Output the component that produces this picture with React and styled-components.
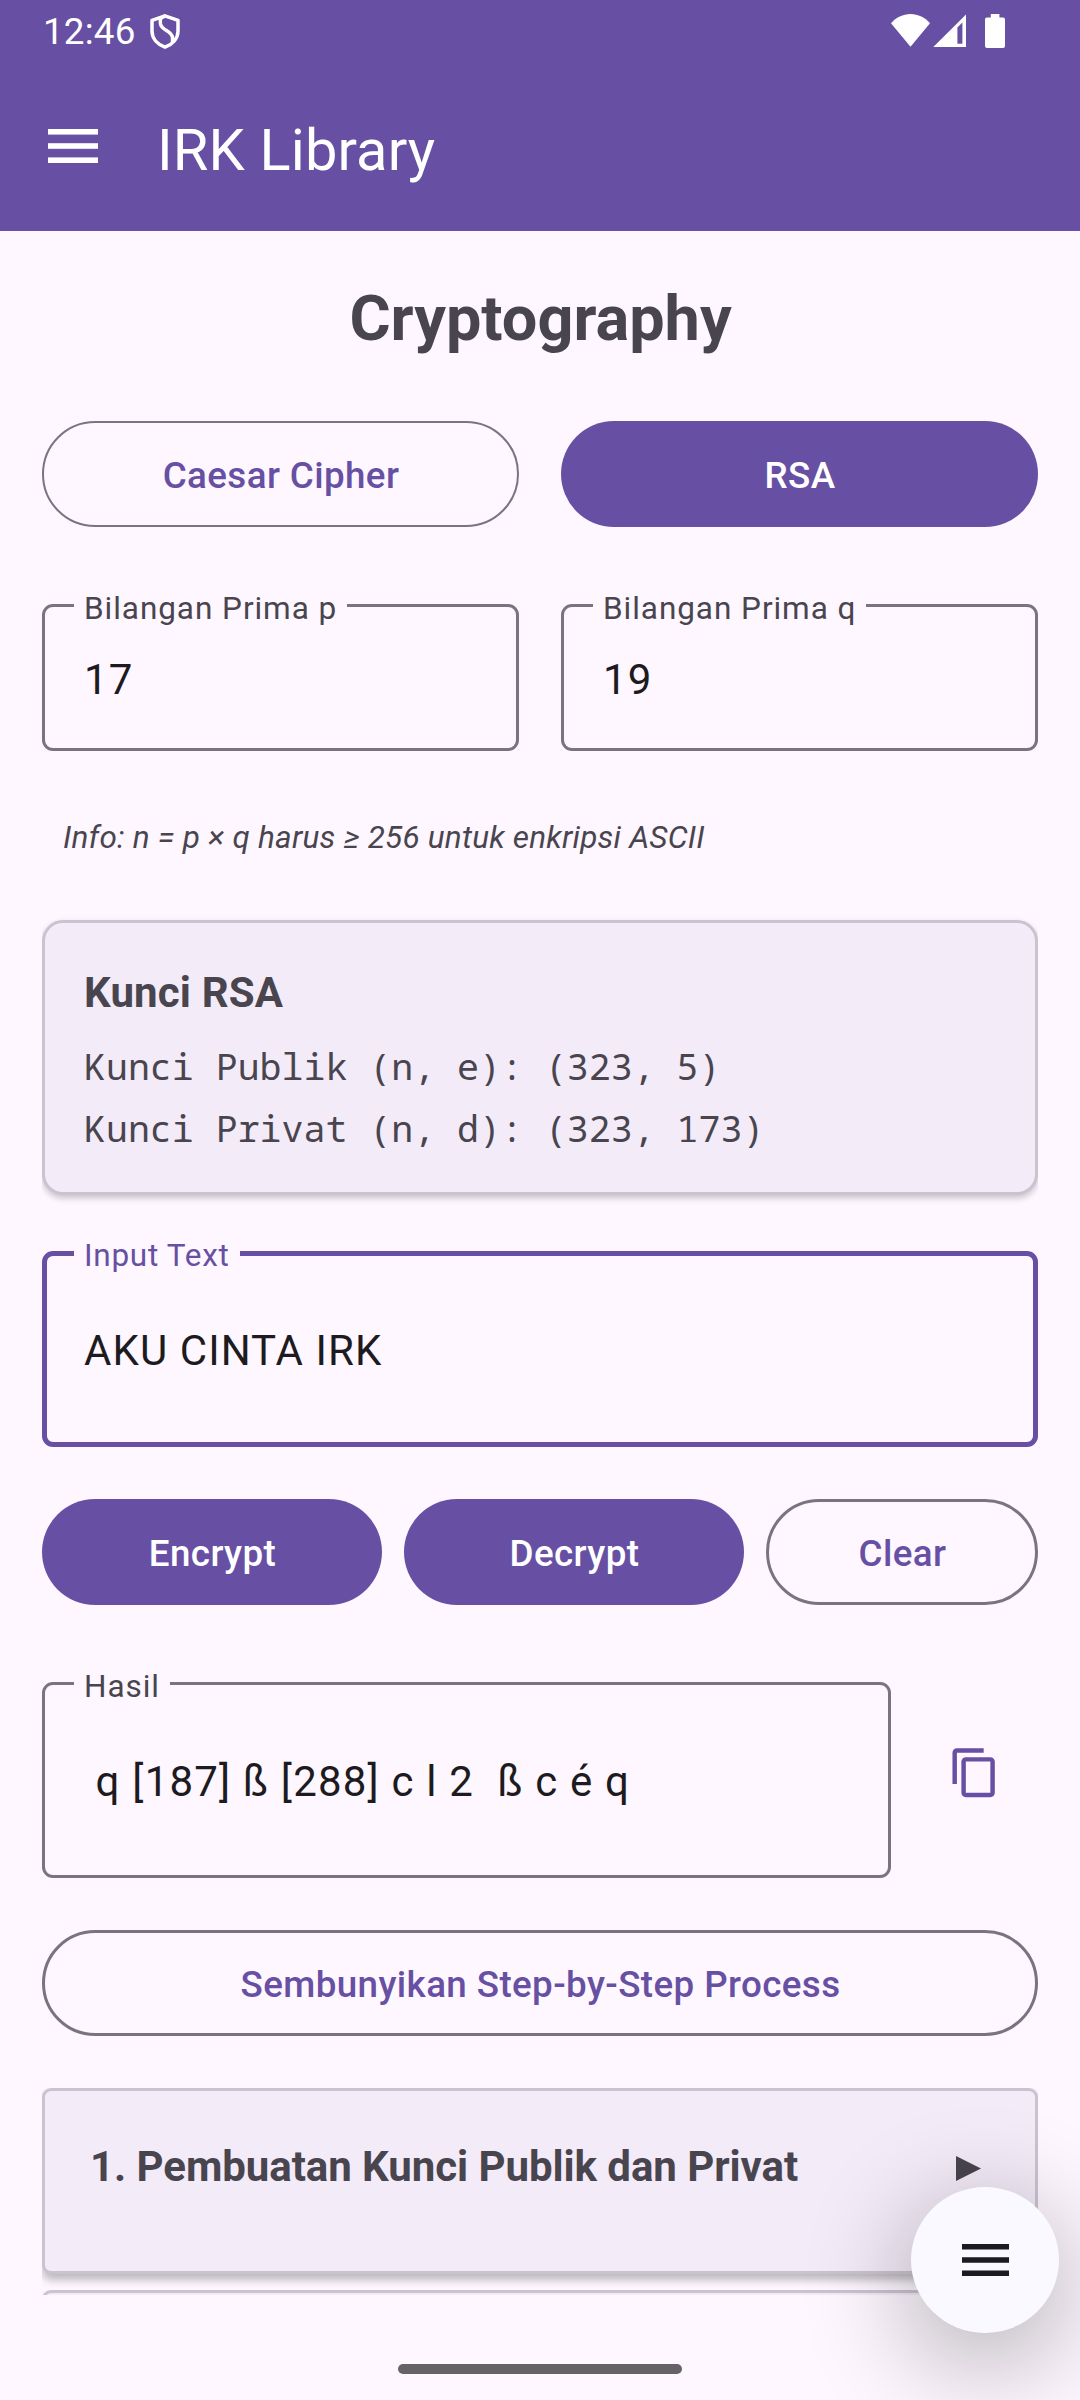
import React from "react";
import styled, { createGlobalStyle, css } from "styled-components";

const c = {
  primary: "#6750a3",
  surface: "#fef7ff",
  card: "#f3ebf8",
  outline: "#79747e",
  outlineSoft: "#cac4d0",
  text: "#1d1b20",
  muted: "#49454f",
};

const GlobalStyle = createGlobalStyle`
  * { box-sizing: border-box; }
  body { margin: 0; background: ${c.surface}; font-family: Roboto, "Liberation Sans", sans-serif; }
`;

const Screen = styled.div`
  position: relative;
  display: flex;
  flex-direction: column;
  width: 1080px;
  height: 2400px;
  overflow: hidden;
  background: ${c.surface};
  color: ${c.muted};
`;

const StatusBar = styled.header`
  display: flex;
  justify-content: space-between;
  height: 63px;
  padding: 14px 75px 0 43px;
  background: ${c.primary};
  color: #fff;
`;

const StatusGroup = styled.div`
  display: flex;
  align-items: flex-start;
`;

const Clock = styled.span`
  width: 107px;
  padding-top: 1px;
  font-size: 36.75px;
  letter-spacing: 0.2px;
  line-height: 34px;
`;

const AppBar = styled.div`
  display: flex;
  align-items: center;
  height: 168px;
  padding: 0 48px 0 48px;
  background: ${c.primary};
  color: #fff;
`;

const MenuButton = styled.button`
  display: flex;
  width: 50px;
  height: 34px;
  margin: 0 59px 2px 0;
  padding: 0;
  border: 0;
  background: none;
  color: inherit;
`;

const AppTitle = styled.span`
  padding-top: 6px;
  font-size: 57.75px;
  letter-spacing: 0.15px;
  line-height: 68px;
`;

const Content = styled.main`
  display: flex;
  flex-direction: column;
  height: 2064px;
  padding: 50px 42px 0;
  overflow: hidden;
`;

const Heading = styled.h1`
  margin: 0 0 65px;
  padding-left: 1px;
  font-size: 63px;
  font-weight: 700;
  line-height: 75px;
  text-align: center;
`;

const Row = styled.div`
  display: grid;
  flex: none;
  grid-template-columns: ${(p) => p.$cols || "1fr"};
  column-gap: ${(p) => p.$gap || 0}px;
  margin-bottom: ${(p) => p.$after}px;
`;

const Button = styled.button`
  display: flex;
  align-items: center;
  justify-content: center;
  min-width: 0;
  height: 106px;
  padding: 3px 0 0 1px;
  border: ${(p) => p.$line || 3}px solid ${c.outline};
  border-radius: 53px;
  background: transparent;
  color: ${c.primary};
  font: 500 36.75px/43px Roboto, "Liberation Sans", sans-serif;
  letter-spacing: 0.4px;
  ${(p) =>
    p.$filled &&
    css`
      border: 0;
      background: ${c.primary};
      color: #fff;
    `}
`;

const Field = styled.fieldset`
  height: ${(p) => p.$height}px;
  min-width: 0;
  margin: 0;
  padding: 0 ${(p) => (p.$focused ? 27 : 29)}px;
  border: ${(p) => (p.$focused ? 5 : 3)}px solid ${(p) => (p.$focused ? c.primary : c.outline)};
  border-radius: 11px;
`;

const FieldLabel = styled.legend`
  height: 41px;
  padding: ${(p) => (p.$focused ? 4 : 5)}px 10px 0;
  color: ${(p) => (p.$focused ? c.primary : c.muted)};
  font-size: 31.5px;
  letter-spacing: ${(p) => (p.$focused ? 0.72 : 0.95)}px;
  line-height: 37px;
`;

const FieldValue = styled.div`
  padding: ${(p) => p.$top}px 10px 0;
  color: ${c.text};
  font-size: 42px;
  letter-spacing: ${(p) => (p.$focused ? 1.08 : 1.2)}px;
  line-height: 50px;
  white-space: pre;
`;

const Info = styled.p`
  margin: 10px 21px 64px;
  font-size: 31.5px;
  font-style: italic;
  letter-spacing: 0.21px;
  line-height: 37px;
`;

const KeyCard = styled.section`
  flex: none;
  height: 275px;
  margin-bottom: 38px;
  padding: 45px 39px 0;
  border: 3px solid ${c.outlineSoft};
  border-radius: 21px;
  background: ${c.card};
  box-shadow: 0 3px 6px rgba(0, 0, 0, 0.22);
  clip-path: inset(-20px 0);
`;

const KeyTitle = styled.h2`
  margin: 0 0 17px;
  font-size: 42px;
  font-weight: 700;
  letter-spacing: 0.15px;
  line-height: 50px;
`;

const KeyLine = styled.div`
  font-family: "Droid Sans Mono", "Noto Sans Mono", "DejaVu Sans Mono", monospace;
  font-size: 36.6px;
  line-height: 62px;
  white-space: pre;
`;

const CopyButton = styled.button`
  display: flex;
  align-items: center;
  justify-content: center;
  width: 147px;
  height: 147px;
  margin: 36px 0 0;
  padding: 0 0 0 20px;
  border: 0;
  background: none;
  color: ${c.primary};
`;

const StepCard = styled.section`
  display: flex;
  flex: none;
  align-items: flex-start;
  justify-content: space-between;
  height: 186px;
  margin-bottom: 16px;
  padding: 51px 54px 0 45px;
  border: 3px solid ${c.outlineSoft};
  border-radius: 9px;
  background: ${c.card};
  box-shadow: 0 6px 8px rgba(0, 0, 0, 0.26);
  clip-path: inset(0 0 -14px);
`;

const StepTitle = styled.h3`
  margin: 0;
  font-size: 42px;
  font-weight: 700;
  letter-spacing: -0.06px;
  line-height: 50px;
`;

const Arrow = styled.svg`
  width: 25px;
  height: 25px;
  margin-top: 14px;
  fill: currentColor;
`;

const NavBar = styled.footer`
  display: flex;
  justify-content: center;
  padding-top: 69px;
`;

const NavHandle = styled.div`
  width: 284px;
  height: 10px;
  border-radius: 5px;
  background: #656366;
`;

const Fab = styled.button`
  position: absolute;
  right: 21px;
  bottom: 67px;
  display: flex;
  align-items: center;
  justify-content: center;
  width: 148px;
  height: 146px;
  padding: 0;
  border: 0;
  border-radius: 50%;
  background: #f9f9ff;
  color: ${c.text};
  box-shadow: 0 26px 108px 2px rgba(0, 0, 0, 0.33);
`;

const Bars = ({ width, height, bar }) => (
  <svg width={width} height={height} fill="currentColor">
    <rect width={width} height={bar} />
    <rect y={(height - bar) / 2} width={width} height={bar} />
    <rect y={height - bar} width={width} height={bar} />
  </svg>
);

const Shield = () => (
  <svg width="30" height="35" viewBox="0 0 30 35" fill="none" stroke="#fff" strokeWidth="3.5" strokeLinejoin="round">
    <path d="M15 1.8 28 6.4V17c0 7.5-5.4 13.4-13 16.2C7.400 30.400 2 24.500 2 17V6.400Z" />
    <path d="M15 2C9.500 4 10 6 10.500 10C11.500 16.500 22.500 17 22.500 24V28" />
  </svg>
);

const StatusIcons = () => (
  <svg width="114" height="35" viewBox="0 0 114 35" fill="#fff">
    <path d="M0 9.200C5 3.500 12 0 19.500 0S34 3.500 39 9.200L19.500 32.700Z" />
    <path fillRule="evenodd" d="M42.300 33 75 .500V33ZM66.400 13.500v16.200h5V8.500Z" />
    <path d="M99.800 0h8.600v3.400h3.600a2 2 0 0 1 2 2V32a2 2 0 0 1-2 2H96a2 2 0 0 1-2-2V5.400a2 2 0 0 1 2-2h3.800Z" />
  </svg>
);

const CopyIcon = () => (
  <svg width="53.5" height="53.5" viewBox="0 0 24 24" fill="currentColor">
    <path d="M16 1H4c-1.100 0-2 .9-2 2v14h2V3h12V1zm3 4H8c-1.100 0-2 .9-2 2v14c0 1.100.9 2 2 2h11c1.100 0 2-.9 2-2V7c0-1.100-.9-2-2-2zm0 16H8V7h11v14z" />
  </svg>
);

const TextField = ({ label, value, height, top, focused }) => (
  <Field $height={height} $focused={focused}>
    <FieldLabel $focused={focused}>{label}</FieldLabel>
    <FieldValue $top={top} $focused={focused}>{value}</FieldValue>
  </Field>
);

export default function App() {
  return (
    <>
      <GlobalStyle />
      <Screen>
        <StatusBar>
          <StatusGroup>
            <Clock>12:46</Clock>
            <Shield />
          </StatusGroup>
          <StatusIcons />
        </StatusBar>
        <AppBar>
          <MenuButton aria-label="Menu">
            <Bars width={50} height={34} bar={5.6} />
          </MenuButton>
          <AppTitle>IRK Library</AppTitle>
        </AppBar>
        <Content>
          <Heading>Cryptography</Heading>
          <Row $cols="1fr 1fr" $gap={42} $after={58}>
            <Button $line={2}>Caesar Cipher</Button>
            <Button $filled>RSA</Button>
          </Row>
          <Row $cols="1fr 1fr" $gap={42} $after={58}>
            <TextField label="Bilangan Prima p" value="17" height={166} top={29} />
            <TextField label="Bilangan Prima q" value="19" height={166} top={29} />
          </Row>
          <Info>Info: n = p × q harus ≥ 256 untuk enkripsi ASCII</Info>
          <KeyCard>
            <KeyTitle>Kunci RSA</KeyTitle>
            <KeyLine>Kunci Publik (n, e): (323, 5)</KeyLine>
            <KeyLine>Kunci Privat (n, d): (323, 173)</KeyLine>
          </KeyCard>
          <Row $after={52}>
            <TextField label="Input Text" value="AKU CINTA IRK" height={214} top={52} focused />
          </Row>
          <Row $cols="340fr 340fr 272fr" $gap={22} $after={58}>
            <Button $filled>Encrypt</Button>
            <Button $filled>Decrypt</Button>
            <Button>Clear</Button>
          </Row>
          <Row $cols="849px 147px" $after={52}>
            <TextField label="Hasil" value=" q [187] ß [288] c l 2  ß c é q" height={215} top={53} />
            <CopyButton aria-label="Copy">
              <CopyIcon />
            </CopyButton>
          </Row>
          <Row $after={52}>
            <Button>Sembunyikan Step-by-Step Process</Button>
          </Row>
          <StepCard>
            <StepTitle>1. Pembuatan Kunci Publik dan Privat</StepTitle>
            <Arrow viewBox="0 0 25 25">
              <path d="M0 0 25 12.500 0 25Z" />
            </Arrow>
          </StepCard>
          <StepCard />
        </Content>
        <NavBar>
          <NavHandle />
        </NavBar>
        <Fab aria-label="Menu">
          <Bars width={47} height={32} bar={5.5} />
        </Fab>
      </Screen>
    </>
  );
}
